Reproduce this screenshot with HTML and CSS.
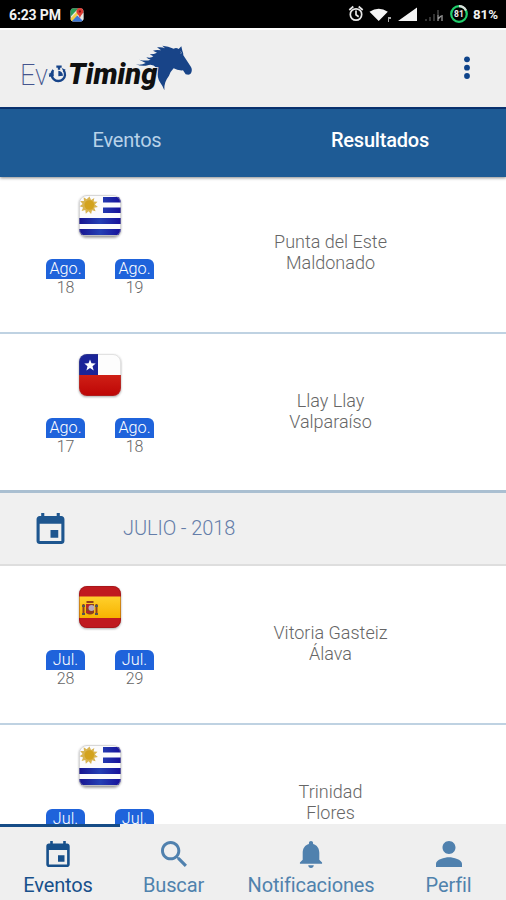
FILE: index.html
```html
<!DOCTYPE html>
<html lang="es">
<head>
<meta charset="utf-8">
<title>EvoTiming</title>
<link rel="stylesheet" href="styles.css">
</head>
<body>
<svg class="defs" width="0" height="0" aria-hidden="true">
  <defs>
    <linearGradient id="stripe" x1="0" x2="1" y1="0" y2="0"><stop offset="0" stop-color="#17138f"/><stop offset=".5" stop-color="#2440b4"/><stop offset="1" stop-color="#17109a"/></linearGradient>
    <linearGradient id="red" x1="0" x2="0" y1="0" y2="1"><stop offset="0" stop-color="#cf2016"/><stop offset="1" stop-color="#bd0505"/></linearGradient>
    <linearGradient id="gold" x1="0" x2="0" y1="0" y2="1"><stop offset="0" stop-color="#ffd02c"/><stop offset="1" stop-color="#f7b300"/></linearGradient>
    <clipPath id="round"><rect width="42" height="42" rx="8"/></clipPath>
    <symbol id="uy" viewBox="0 0 42 42"><g clip-path="url(#round)">
      <rect width="42" height="42" fill="#fbfbfd"/>
      <path fill="url(#stripe)" d="M24 2h18v5.500H24zM24 12.500h18V18H24zM0 23h42v6H0zM0 34h42v6H0z"/>
      <path fill="#d8b450" d="m10.500 1.500 1.600 3.400 3.200-2-.6 3.700 3.800.2-2.600 2.800 3 2.400-3.700.8 1.400 3.500-3.600-1-.9 3.700-2.600-2.800-2.700 2.600-.5-3.800-3.700 1 1.500-3.500-3.500-1.200 3-2.200L1.200 6l3.800-.1-.4-3.700 3.100 2z"/>
      <circle cx="10.300" cy="10" r="4.800" fill="#d3a31d"/><path d="M1 41.200h40" stroke="#888" stroke-width="1.200"/></g>
      <rect x=".5" y=".5" width="41" height="41" rx="7.500" fill="none" stroke="#aaa" stroke-opacity=".45"/></symbol>
    <symbol id="cl" viewBox="0 0 42 42"><g clip-path="url(#round)">
      <rect width="42" height="42" fill="#fdfdfd"/><path fill="#1b2498" d="M0 0h19v21H0z"/><path fill="url(#red)" d="M0 21h42v21H0z"/>
      <path fill="#fff" d="m11 5.500 1.500 3.800 4.200.2-3.200 2.700 1.200 4.200-3.700-2.500-3.600 2.500 1.100-4.200-3.200-2.700 4.200-.2z"/></g>
      <rect x=".5" y=".5" width="41" height="41" rx="7.500" fill="none" stroke="#777" stroke-opacity=".2"/></symbol>
    <symbol id="es" viewBox="0 0 42 42"><g clip-path="url(#round)">
      <rect width="42" height="42" fill="#c01a1f"/><path fill="url(#gold)" d="M0 10.500h42V32H0z"/>
      <path fill="#91401d" d="M7.500 15h7v2h-7zM7 18h8v9q-4 3-8 0zM3.500 18h2v11h-2zM16.500 18h2v11h-2z"/><path fill="#555" d="M3 19h3v2H3zM16 19h3v2h-3zM3 27h3v2H3zM16 27h3v2h-3z"/><path fill="#b6252a" d="M7 18h4v4H7zM7 25h4v2H7z"/><circle cx="12.500" cy="22" r="3" fill="#b9a9bd"/></g>
      <rect x=".5" y=".5" width="41" height="41" rx="7.500" fill="none" stroke="#7a1010" stroke-opacity=".35"/></symbol>
    <symbol id="calendar" viewBox="3 1 18 20"><path d="M17 12h-5v5h5v-5zM16 1v2H8V1H6v2H5c-1.110 0-2 .9-2 2v14c0 1.100.89 2 2 2h14c1.100 0 2-.9 2-2V5c0-1.100-.9-2-2-2h-1V1h-2zm3 18H5V8h14v11z"/></symbol>
  </defs>
</svg>

<div class="screen">
  <div class="status">
    <span class="clock">6:23 PM</span>
    <svg class="maps" viewBox="0 0 24 24"><defs><clipPath id="m"><rect x="1" y="1" width="22" height="22" rx="4"/></clipPath></defs><g clip-path="url(#m)"><path fill="#e9e9e4" d="M0 0h24v24H0z"/><path fill="#2d9e57" d="M0 0h15L0 16z"/><path fill="#3d78d8" d="m12 12 12 12H0z"/><path fill="#f3cc48" d="M0 19 16 2l3 4L2 24H0z"/><path fill="#e9e9e4" d="m12 12 12 10V8z"/></g><path fill="#dc3e35" d="M17 0c-4 0-6 3-6 6 0 4 5 6 6 12 1-6 6-8 6-12 0-3-2-6-6-6z"/><circle cx="17" cy="6" r="2" fill="#811"/></svg>
    <svg class="tray" viewBox="0 0 104 24">
      <g fill="none" stroke="#e8e8e8" stroke-width="1.700"><circle cx="8" cy="12.500" r="5.700"/><path d="M8 8.500v4.300l2.700 2M1.300 8l4-3.500M14.700 8l-4-3.500"/></g>
      <path fill="#f4f4f4" d="M21.500 9.800q9.300-6.200 18.300 0L30.700 19zM50 19h19V5.500z"/>
      <path fill="#aaa" d="M40 15h3v2h-2v3h-1z"/>
      <path fill="#333" d="M77 17h2v2h-2zM81 15h2v4h-2zM85 12h2v7h-2zM89 8h2v5h-2z"/><path d="M90 13v6M94 13v6M90 17l3-3" stroke="#999" stroke-width="1.300"/>
    </svg>
    <svg class="battery" viewBox="0 0 20 20"><circle cx="10" cy="10" r="7.800" fill="none" stroke="#20ce6c" stroke-width="2.200"/><path d="M10 2.200A7.800 7.800 0 0 1 17 6.500" fill="none" stroke="#ddd" stroke-width="2.200"/><text x="10" y="13.300" text-anchor="middle">81</text></svg>
    <span class="percent">81%</span>
  </div>

  <header class="appbar">
    <svg class="logo" viewBox="60 125 525 150">
      <text class="logo-thin" x="63" y="253" textLength="84" lengthAdjust="spacingAndGlyphs">Ev</text>
      <g fill="none" stroke="#174489" stroke-width="7"><path d="M163 209a20 20 0 1 0 31 1M150 226h13M172 199h16M180 198v10"/></g>
      <path fill="#174489" d="M178 211q13 2 14 15l-14 2zM148 221l16-7v14zM188 203l12 5-6 7z"/>
      <path fill="#184488" d="M411 192Q426 196 440 188L421 178Q441 183 455 178Q446 177 442 171Q457 174 463 168L452 162Q466 162 474 157L462 151Q472 147 486 150L474 141Q489 139 498 144L490 136Q508 137 524 145Q532 141 539 146L547 138L550 151Q553 157 553 165L576 200Q581 208 576 219Q572 226 560 222L552 210Q535 211 524 204Q514 214 510 226Q503 235 499 246Q495 257 496 270Q490 255 483 246Q474 232 476 213L472 202Q462 191 449 194Q430 200 411 192Z"/>
      <path d="m544 153 5 5-6 1" fill="none" stroke="#7e96ba" stroke-width="2"/>
      <text class="logo-bold" x="207" y="252" textLength="268" lengthAdjust="spacingAndGlyphs">Timing</text>
    </svg>
    <svg class="more" viewBox="0 0 8 24"><circle cx="4" cy="3.300" r="2.900"/><circle cx="4" cy="11.700" r="2.900"/><circle cx="4" cy="20" r="2.900"/></svg>
  </header>

  <nav class="tabs"><span class="tab">Eventos</span><span class="tab active">Resultados</span></nav>

  <main class="list">
    <article class="event first">
      <div class="when"><svg class="flag"><use href="#uy"/></svg><div class="dates"><div class="date"><b>Ago.</b><span>18</span></div><div class="date"><b>Ago.</b><span>19</span></div></div></div>
      <div class="place">Punta del Este<br>Maldonado</div>
    </article>
    <article class="event last">
      <div class="when"><svg class="flag"><use href="#cl"/></svg><div class="dates"><div class="date"><b>Ago.</b><span>17</span></div><div class="date"><b>Ago.</b><span>18</span></div></div></div>
      <div class="place">Llay Llay<br>Valparaíso</div>
    </article>
    <h2 class="month"><svg class="month-icon"><use href="#calendar"/></svg><span>JULIO - 2018</span></h2>
    <article class="event">
      <div class="when"><svg class="flag"><use href="#es"/></svg><div class="dates"><div class="date"><b>Jul.</b><span>28</span></div><div class="date"><b>Jul.</b><span>29</span></div></div></div>
      <div class="place">Vitoria Gasteiz<br>Álava</div>
    </article>
    <article class="event">
      <div class="when"><svg class="flag"><use href="#uy"/></svg><div class="dates"><div class="date"><b>Jul.</b></div><div class="date"><b>Jul.</b></div></div></div>
      <div class="place">Trinidad<br>Flores</div>
    </article>
  </main>

  <nav class="bottom">
    <a class="item current"><svg class="nav-icon cal"><use href="#calendar"/></svg><span>Eventos</span></a>
    <a class="item"><svg class="nav-icon" viewBox="3 3 17.500 17.500"><path d="M15.500 14h-.79l-.28-.27C15.410 12.590 16 11.110 16 9.500 16 5.910 13.090 3 9.500 3S3 5.910 3 9.500 5.910 16 9.500 16c1.610 0 3.090-.59 4.230-1.570l.27.28v.79l5 4.990L20.490 19l-4.990-5zm-6 0C7.010 14 5 11.990 5 9.500S7.010 5 9.500 5 14 7.010 14 9.500 11.990 14 9.500 14z"/></svg><span>Buscar</span></a>
    <a class="item"><svg class="nav-icon bell" viewBox="4 2.500 16 19.500"><path d="M12 22c1.100 0 2-.9 2-2h-4c0 1.100.89 2 2 2zm6-6v-5c0-3.070-1.640-5.640-4.500-6.320V4c0-.83-.67-1.500-1.500-1.500s-1.500.67-1.500 1.500v.68C7.630 5.360 6 7.920 6 11v5l-2 2v1h16v-1l-2-2z"/></svg><span>Notificaciones</span></a>
    <a class="item"><svg class="nav-icon person" viewBox="4 4 16 16"><path d="M12 12c2.210 0 4-1.790 4-4s-1.790-4-4-4-4 1.790-4 4 1.790 4 4 4zm0 2c-2.670 0-8 1.340-8 4v2h16v-2c0-2.660-5.330-4-8-4z"/></svg><span>Perfil</span></a>
  </nav>
</div>
</body>
</html>
```

FILE: styles.css
```css
* { box-sizing: border-box; }
body { margin: 0; font-family: Roboto, "Liberation Sans", sans-serif; background: #fff; }
svg { display: block; flex: none; }
.defs { position: absolute; }
.screen { width: 506px; height: 900px; display: flex; flex-direction: column; overflow: hidden; }

.status { flex: none; height: 28px; padding: 0 8px 0 9px; display: flex; align-items: center; background: #000; color: #f2f2f2; font-size: 13.5px; font-weight: 700; white-space: nowrap; }
.clock { width: 61px; padding-top: 2px; font-size: 14px; letter-spacing: -.15px; }
.maps { width: 14px; height: 14px; margin-top: 1px; }
.tray { width: 104px; height: 24px; margin: 0 0 0 264px; }
.battery { width: 20px; height: 20px; margin: -1px 0 0 -3px; }
.battery text { font-size: 8.5px; font-weight: 700; fill: #eee; }
.percent { margin: 1px 0 0 auto; font-size: 13.3px; }

.appbar { flex: none; height: 81px; padding: 0 35px 0 20px; display: flex; align-items: center; justify-content: space-between; background: #efefef; border-top: 2px solid #fff; border-bottom: 2px solid #0b3574; }
.logo { width: 175px; height: 50px; margin: 0 0 3px -1px; }
.logo-thin { font-family: Roboto, sans-serif; font-weight: 200; font-size: 91px; fill: #45558e; }
.logo-bold { font-family: Roboto, sans-serif; font-style: italic; font-weight: 900; font-size: 87px; fill: #101010; stroke: #efefef; stroke-width: 5px; paint-order: stroke; }
.more { width: 8px; height: 24px; margin-bottom: 2px; fill: #0e438a; }

.tabs { flex: none; height: 68px; display: flex; background: #1e5b95; box-shadow: 0 1px 3px #0007; position: relative; }
.tab { flex: 1; padding-left: 1px; text-align: center; font-size: 20px; line-height: 62px; color: #b8d2e9; letter-spacing: -.2px; }
.tab.active { color: #fff; font-weight: 500; }

.list { flex: 1; min-height: 0; overflow: hidden; }
.event { height: 159px; display: flex; border-bottom: 2px solid #bfd2e2; color: #666; font-weight: 300; }
.event.first { height: 157px; }
.event.first .when { padding-top: 18px; }
.event.first .place { padding-top: 54px; }
.event.last { border-bottom: 3px solid #aabfd1; }
.when { width: 200px; padding-top: 20px; display: flex; flex-direction: column; align-items: center; }
.flag { width: 42px; height: 42px; filter: drop-shadow(0 1px 1px #0005); }
.dates { display: flex; gap: 30px; margin-top: 22px; }
.date { width: 39px; display: flex; flex-direction: column; align-items: center; font-size: 16px; }
.date b { width: 39px; height: 20px; line-height: 19px; text-align: center; background: #1f63db; color: #fff; border-radius: 6px 6px 0 0; font-weight: 300; font-size: 16.2px; }
.date span { line-height: 17px; }
.place { width: 261px; padding-top: 56px; text-align: center; font-size: 18px; line-height: 21px; }

.month { height: 73px; margin: 0; padding-left: 35px; display: flex; align-items: center; gap: 58px; background: #f0f0f0; border-bottom: 2px solid #dedede; color: #647da9; font-size: 20px; font-weight: 300; letter-spacing: -.1px; }
.month-icon { width: 31px; height: 31px; fill: #1e568f; }
.month span { margin: 0 0 2px -1px; }

.bottom { flex: none; height: 76px; display: grid; grid-template-columns: 116px 115px 160px 115px; background: #efefef; position: relative; }
.bottom::before { content: ""; position: absolute; left: 0; top: 0; width: 120px; height: 3px; background: #164c87; }
.item { display: flex; flex-direction: column; align-items: center; padding-top: 17px; color: #4f82ad; fill: #5081ae; font-size: 20px; line-height: 24px; letter-spacing: -.15px; }
.item span { margin-top: 6px; }
.item.current { color: #17508b; fill: #17508b; }
.nav-icon { width: 26px; height: 26px; }
.nav-icon.bell { width: 24px; height: 27px; margin-bottom: -1px; }
```
